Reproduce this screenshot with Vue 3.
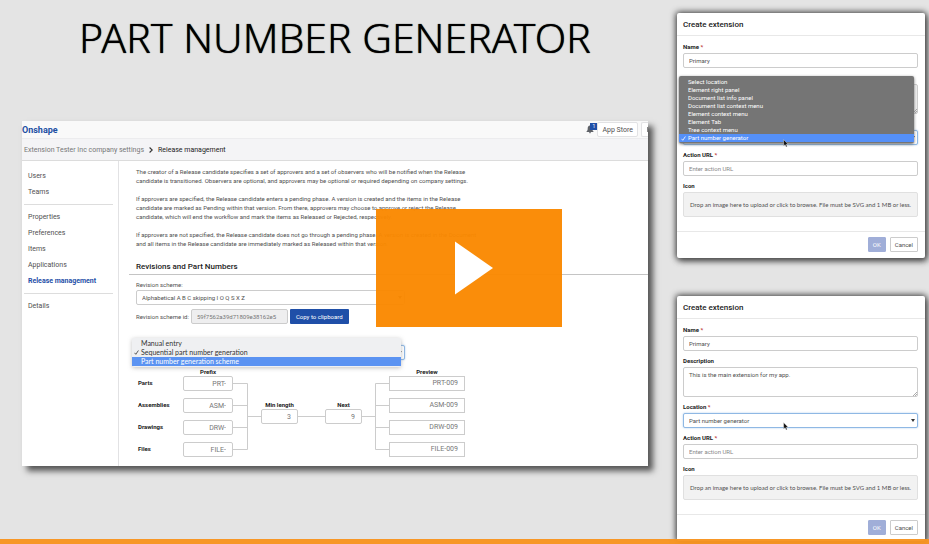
<script setup>
import { ref } from 'vue'

const navGroups = [
  ['Users', 'Teams'],
  ['Properties', 'Preferences', 'Items', 'Applications', 'Release management'],
  ['Details'],
]
const activeNav = 'Release management'

const paragraphs = [
  [
    'The creator of a Release candidate specifies a set of approvers and a set of observers who will be notified when the Release',
    'candidate is transitioned. Observers are optional, and approvers may be optional or required depending on company settings.',
  ],
  [
    'If approvers are specified, the Release candidate enters a pending phase. A version is created and the items in the Release',
    'candidate are marked as Pending within that version. From there, approvers may choose to approve or reject the Release',
    'candidate, which will end the workflow and mark the items as Released or Rejected, respectively.',
  ],
  [
    'If approvers are not specified, the Release candidate does not go through a pending phase. A version is created in the Document',
    'and all items in the Release candidate are immediately marked as Released within that version.',
  ],
]

const schemes = ['Manual entry', 'Sequential part number generation', 'Part number generation scheme']
const scheme = ref(schemes[1])

const kinds = ref([
  { label: 'Parts', prefix: 'PRT-' },
  { label: 'Assemblies', prefix: 'ASM-' },
  { label: 'Drawings', prefix: 'DRW-' },
  { label: 'Files', prefix: 'FILE-' },
])
const minLength = ref('3')
const next = ref('9')
const preview = (prefix) => prefix + String(next.value).padStart(Number(minLength.value) || 1, '0')

const locations = [
  'Select location',
  'Element right panel',
  'Document list info panel',
  'Document list context menu',
  'Element context menu',
  'Element Tab',
  'Tree context menu',
  'Part number generator',
]
const dialogs = ref([
  { id: 'a', open: true, name: 'Primary', description: '', location: 'Part number generator', url: '' },
  { id: 'b', open: false, name: 'Primary', description: 'This is the main extension for my app.', location: 'Part number generator', url: '' },
])
</script>

<template>
  <div class="stage">
    <div class="left">
      <h1 class="title">PART NUMBER GENERATOR</h1>

      <section class="window">
        <header class="topbar">
          <a class="brand" href="#">Onshape</a>
          <div class="tools">
            <span class="bell">
              <svg width="8" height="9" viewBox="0 0 8 9" aria-hidden="true">
                <path d="M4 0.6C2.4 0.8 1.7 2 1.7 3.4C1.7 5.3 1.2 5.8 0.2 6.9H7.8C6.8 5.8 6.3 5.3 6.3 3.4C6.3 2 5.6 0.8 4 0.6ZM3 7.3H5C5 8.6 3 8.6 3 7.3Z" fill="#5d6066" />
              </svg>
              <span class="badge">1</span>
            </span>
            <button class="store" type="button">App Store</button>
            <button class="cut" type="button" aria-label="More"></button>
          </div>
        </header>
        <div class="crumbs">
          <a href="#">Extension Tester Inc company settings</a>
          <svg width="4" height="6" viewBox="0 0 4 6" aria-hidden="true"><path d="M0.6 0.5L3.2 3L0.6 5.5" fill="none" stroke="#333" stroke-width="1.1" /></svg>
          <span>Release management</span>
        </div>

        <div class="body">
          <nav class="side">
            <ul v-for="(group, i) in navGroups" :key="i">
              <li v-for="item in group" :key="item">
                <a href="#" :class="{ active: item === activeNav }">{{ item }}</a>
              </li>
            </ul>
          </nav>

          <main class="content">
            <p v-for="(lines, i) in paragraphs" :key="i">
              <template v-for="line in lines" :key="line">{{ line }}<br /></template>
            </p>
            <h2>Revisions and Part Numbers</h2>

            <div class="form">
              <label for="rev">Revision scheme:</label>
              <div class="pick">
                <select id="rev"><option>Alphabetical A B C skipping I O Q S X Z</option></select>
                <svg class="arrow" width="4" height="3" viewBox="0 0 4 3" aria-hidden="true"><path d="M0 0H4L2 3Z" fill="#666" /></svg>
              </div>
              <div class="idrow">
                <label for="revid">Revision scheme id:</label>
                <input id="revid" value="59f7562a39d71809e38162e5" readonly />
                <button type="button">Copy to clipboard</button>
              </div>

              <div class="partscheme">
                <label for="pns">Part number scheme:</label>
                <div class="pick focus">
                  <select id="pns" v-model="scheme"><option v-for="s in schemes" :key="s">{{ s }}</option></select>
                  <svg class="arrow" width="4" height="3" viewBox="0 0 4 3" aria-hidden="true"><path d="M0 0H4L2 3Z" fill="#666" /></svg>
                </div>
                <ul class="lightmenu" role="listbox" aria-label="Part number scheme">
                  <li v-for="(s, i) in schemes" :key="s" role="option" :aria-selected="s === scheme" :class="{ hover: i === 2 }">
                    <svg v-if="s === scheme" width="5" height="5" viewBox="0 0 5 5" aria-hidden="true"><path d="M0.5 2.8L1.8 4.3L4.4 0.5" fill="none" stroke="#333" stroke-width="0.8" /></svg>{{ s }}
                  </li>
                </ul>
              </div>

              <div class="scheme">
                <div class="names">
                  <label v-for="k in kinds" :key="k.label" :for="'p' + k.label">{{ k.label }}</label>
                </div>
                <div class="stack">
                  <b>Prefix</b>
                  <input v-for="k in kinds" :id="'p' + k.label" :key="k.label" v-model="k.prefix" />
                </div>
                <svg class="link" width="28" height="81" viewBox="0 0 28 81" aria-hidden="true"><path d="M0 7.5H14.5V73.5H0M0 29.5H14.5M0 51.5H14.5M14.5 40.5H28" /></svg>
                <div class="single">
                  <label for="minlen">Min length</label>
                  <input id="minlen" v-model="minLength" />
                </div>
                <svg class="link" width="27" height="81" viewBox="0 0 27 81" aria-hidden="true"><path d="M0 40.5H27" /></svg>
                <div class="single">
                  <label for="next">Next</label>
                  <input id="next" v-model="next" />
                </div>
                <svg class="link" width="27" height="81" viewBox="0 0 27 81" aria-hidden="true"><path d="M27 7.5H13.5V73.5H27M27 29.5H13.5M27 51.5H13.5M13.5 40.5H0" /></svg>
                <div class="stack wide">
                  <b>Preview</b>
                  <output v-for="k in kinds" :key="k.label">{{ preview(k.prefix) }}</output>
                </div>
              </div>
            </div>
          </main>
        </div>
      </section>
    </div>

    <div class="right">
      <form v-for="d in dialogs" :key="d.id" class="dialog" @submit.prevent>
        <h3>Create extension</h3>
        <div class="fields">
          <div class="field">
            <label :for="d.id + 'name'">Name <i>*</i></label>
            <input :id="d.id + 'name'" v-model="d.name" />
          </div>
          <div class="field">
            <label :for="d.id + 'desc'">Description</label>
            <div class="area">
              <textarea :id="d.id + 'desc'" v-model="d.description" :class="{ dim: d.open }"></textarea>
              <svg class="grip" width="4" height="4" viewBox="0 0 4 4" aria-hidden="true"><path d="M0 4L4 0M2 4L4 2" stroke="#888" stroke-width="0.7" /></svg>
            </div>
          </div>
          <div class="field">
            <label :for="d.id + 'loc'">Location <i>*</i></label>
            <div class="pick focus">
              <select :id="d.id + 'loc'" v-model="d.location"><option v-for="l in locations" :key="l">{{ l }}</option></select>
              <svg class="arrow" width="4" height="3" viewBox="0 0 4 3" aria-hidden="true"><path d="M0 0H4L2 3Z" fill="#333" /></svg>
              <ul v-if="d.open" class="darkmenu" role="listbox" aria-label="Location">
                <li v-for="l in locations" :key="l" role="option" :aria-selected="l === d.location">
                  <svg v-if="l === d.location" width="5" height="5" viewBox="0 0 5 5" aria-hidden="true"><path d="M0.5 2.8L1.8 4.3L4.4 0.5" fill="none" stroke="#fff" stroke-width="0.8" /></svg>{{ l }}
                </li>
              </ul>
              <svg class="cursor" width="6" height="9" viewBox="0 0 6 9" aria-hidden="true"><path d="M0.6 0.6V7L2.1 5.7L3.1 8L4.2 7.5L3.2 5.3H5.2Z" fill="#111" stroke="#fff" stroke-width="0.4" /></svg>
            </div>
          </div>
          <div class="field">
            <label :for="d.id + 'url'">Action URL <i>*</i></label>
            <input :id="d.id + 'url'" v-model="d.url" placeholder="Enter action URL" />
          </div>
          <div class="field">
            <b>Icon</b>
            <div class="drop">Drop an image here to upload or click to browse. File must be SVG and 1 MB or less.</div>
          </div>
        </div>
        <footer>
          <button class="ok" type="submit">OK</button>
          <button class="cancel" type="button">Cancel</button>
        </footer>
      </form>
    </div>

    <button class="play" type="button" aria-label="Play video">
      <svg width="38" height="54" viewBox="0 0 38 54" aria-hidden="true"><path d="M0 0.5L38 27L0 53.5Z" fill="#fff" /></svg>
    </button>
    <div class="progress"></div>
  </div>
</template>

<style>
body {
  background: #e4e4e4;
}
</style>

<style scoped>
* {
  box-sizing: border-box;
}
.stage {
  position: relative;
  display: grid;
  grid-template-columns: minmax(0, 1fr) 248px;
  gap: 29px;
  align-items: start;
  min-height: 100vh;
  padding: 0 4px 0 22px;
  overflow: hidden;
  background: #e4e4e4;
  color: #505050;
  font: 7px/10px Roboto, "Liberation Sans", sans-serif;
}
input,
select,
textarea,
button,
output {
  margin: 0;
  font: inherit;
  color: inherit;
}
ul {
  margin: 0;
  padding: 0;
  list-style: none;
}
a {
  color: inherit;
  text-decoration: none;
}
.title {
  margin: 0;
  padding: 7px 0 54px;
  color: #000;
  font: 300 41px/60px "Noto Sans", "Open Sans", sans-serif;
  text-align: center;
  text-shadow: 0 0 1px #000;
  white-space: nowrap;
}
.window {
  background: #fff;
  box-shadow: 5px 5px 6px #555;
}
.topbar {
  display: flex;
  align-items: center;
  justify-content: space-between;
  height: 17px;
  background: #f9f9f9;
}
.brand {
  color: #1d4fa3;
  font-size: 9px;
  font-weight: 700;
}
.tools {
  display: flex;
  align-items: center;
}
.bell {
  position: relative;
  display: flex;
  width: 11px;
}
.badge {
  position: absolute;
  top: -2px;
  left: 4px;
  width: 7px;
  height: 7px;
  background: #1f4fa8;
  color: #fff;
  font-size: 5px;
  line-height: 7px;
  text-align: center;
}
.store,
.cut {
  height: 15px;
  padding: 0 4px;
  border: 1px solid #e2e2e4;
  border-radius: 2px;
  background: #fff;
}
.cut {
  display: flex;
  align-items: center;
  justify-content: flex-end;
  width: 7px;
  margin-left: 3px;
  padding: 0;
  border-right: 0;
  border-radius: 2px 0 0 2px;
}
.cut::after {
  width: 1px;
  height: 5px;
  background: #888;
  content: "";
}
.crumbs {
  display: flex;
  align-items: center;
  gap: 5px;
  height: 23px;
  padding-left: 2px;
  border-top: 1px solid #ececee;
  border-bottom: 1px solid #dcdcdc;
  background: #f4f4f6;
  color: #222;
}
.crumbs a {
  color: #777;
}
.body {
  display: flex;
}
.side {
  width: 97px;
  flex: none;
  padding: 7px 5px 0 2px;
  border-right: 1px solid #e2e2e4;
}
.side ul + ul {
  margin-top: 4px;
  padding-top: 4px;
  border-top: 1px solid #ddd;
}
.side a {
  display: block;
  padding-left: 4px;
  line-height: 16px;
}
.side .active {
  color: #1f4fa8;
  font-weight: 700;
}
.content {
  flex: 1;
  min-width: 0;
  padding: 6px 0 9px 10px;
}
.content p {
  margin: 0 0 9px;
  padding-left: 7px;
  font-size: 6px;
  line-height: 9px;
  white-space: nowrap;
}
.content h2 {
  margin: 0;
  padding: 4px 0 1px 7px;
  border-bottom: 1px solid #c4c4c4;
  color: #222;
  font-size: 8px;
  font-weight: 500;
  line-height: 12px;
}
.form {
  padding: 5px 0 0 7px;
  font-size: 6px;
}
.form > label,
.partscheme > label {
  display: block;
}
.pick {
  position: relative;
}
.form .pick {
  max-width: 269px;
}
.pick select {
  display: block;
  width: 100%;
  height: 15px;
  padding: 0 5px;
  border: 1px solid #ccc;
  border-radius: 2px;
  outline: 0;
  background: #fff;
  appearance: none;
}
.pick.focus select {
  border-color: #8fb8e4;
  box-shadow: 0 0 2px #a9c9ec;
}
.arrow {
  position: absolute;
  top: 6px;
  right: 3px;
}
.idrow {
  display: flex;
  align-items: center;
  gap: 2px;
  margin-top: 4px;
}
.idrow input {
  width: 97px;
  height: 15px;
  padding: 0 5px;
  border: 1px solid #ccc;
  border-radius: 2px;
  background: #eeeeef;
  color: #777;
}
.idrow button {
  height: 15px;
  padding: 0 6px;
  border: 0;
  border-radius: 1px;
  background: #1f4fa8;
  color: #fff;
}
.partscheme {
  position: relative;
  max-width: 269px;
  padding-top: 11px;
}
.lightmenu {
  position: absolute;
  top: 14px;
  right: 4px;
  left: -4px;
  padding: 1px 0;
  border-radius: 2px;
  background: #eff0f2;
  box-shadow: 0 1px 4px #8888;
  color: #333;
  font-family: Lato, Roboto, sans-serif;
  font-size: 7px;
}
.lightmenu li,
.darkmenu li {
  position: relative;
  padding-left: 9px;
  line-height: 9px;
}
.lightmenu svg,
.darkmenu svg {
  position: absolute;
  top: 2px;
  left: 2px;
}
.lightmenu .hover {
  background: #5b93f2;
  color: #fff;
}
.scheme {
  display: flex;
  align-items: flex-end;
  margin-top: 7px;
}
.scheme input,
.scheme output {
  display: block;
  width: 100%;
  height: 15px;
  padding: 0 6px;
  border: 1px solid #ccc;
  border-radius: 2px;
  background: #fff;
  color: #777;
  font-size: 7px;
  line-height: 13px;
  text-align: right;
}
.scheme output {
  border-radius: 0;
}
.scheme b,
.scheme label {
  color: #222;
  font-weight: 700;
}
.names,
.stack {
  display: flex;
  flex-direction: column;
  gap: 7px;
}
.names {
  width: 47px;
  padding: 0 0 1px 2px;
}
.names label {
  line-height: 15px;
}
.stack {
  width: 50px;
}
.stack b {
  margin-bottom: -7px;
  line-height: 9px;
  text-align: center;
}
.wide {
  width: 76px;
}
.link {
  display: block;
  flex: none;
  fill: none;
  stroke: #ccc;
}
.single {
  display: flex;
  flex-direction: column;
  align-items: center;
  width: 37px;
  height: 81px;
  padding-top: 24px;
  line-height: 9px;
  white-space: nowrap;
}
.right {
  display: grid;
  gap: 38px;
  padding-top: 13px;
}
.dialog {
  border-radius: 2px;
  background: #fff;
  box-shadow: 0 0 6px 1px #444, 2px 3px 6px #666;
  font-size: 6px;
}
.dialog h3 {
  margin: 0;
  padding: 2px 0 0 6px;
  border-bottom: 1px solid #e8e8e8;
  color: #222;
  font-size: 8px;
  font-weight: 500;
  line-height: 20px;
}
.fields {
  display: grid;
  gap: 5px;
  padding: 6px 7px 14px 6px;
}
.field {
  display: grid;
  gap: 1px;
}
.field label,
.field b {
  color: #222;
  font-weight: 700;
}
.field i {
  color: #b33;
  font-style: normal;
}
.field input,
.field textarea {
  display: block;
  width: 100%;
  height: 15px;
  padding: 0 5px;
  border: 1px solid #ccc;
  border-radius: 2px;
  background: #fff;
}
.field input::placeholder {
  color: #888;
  opacity: 1;
}
.area {
  position: relative;
}
.field textarea {
  height: 30px;
  padding-top: 2px;
  resize: none;
}
.field .dim {
  background: #f0f0f0;
}
.grip {
  position: absolute;
  right: 1px;
  bottom: 1px;
}
.darkmenu {
  position: absolute;
  right: 4px;
  bottom: 2px;
  left: -4px;
  padding: 2px 0 1px;
  border-radius: 2px;
  background: #757575;
  box-shadow: 0 1px 3px #666;
  color: #fff;
}
.darkmenu li {
  line-height: 8px;
}
.darkmenu li[aria-selected="true"] {
  background: #5590f8;
}
.cursor {
  position: absolute;
  top: 9px;
  left: 100px;
}
.drop {
  height: 25px;
  border: 1px solid #e0e0e0;
  border-radius: 2px;
  background: #f2f2f2;
  font-family: Lato, Roboto, sans-serif;
  line-height: 23px;
  text-align: center;
  white-space: nowrap;
}
.dialog footer {
  display: flex;
  justify-content: flex-end;
  gap: 4px;
  padding: 5px 7px 6px;
  border-top: 1px solid #e8e8e8;
}
.dialog button {
  height: 15px;
  padding: 0 4px;
  border: 1px solid #ccc;
  border-radius: 1px;
  background: #fff;
}
.dialog .ok {
  border-color: #a0aed8;
  background: #a0aed8;
  color: #fff;
}
.play {
  position: absolute;
  top: 209px;
  left: 376px;
  display: flex;
  align-items: center;
  justify-content: center;
  width: 186px;
  height: 118px;
  padding: 0 0 0 10px;
  border: 0;
  background: rgba(250, 136, 0, 0.96);
}
.progress {
  position: absolute;
  right: 0;
  bottom: 0;
  left: 0;
  height: 5px;
  background: rgba(247, 148, 32, 0.97);
}
</style>
